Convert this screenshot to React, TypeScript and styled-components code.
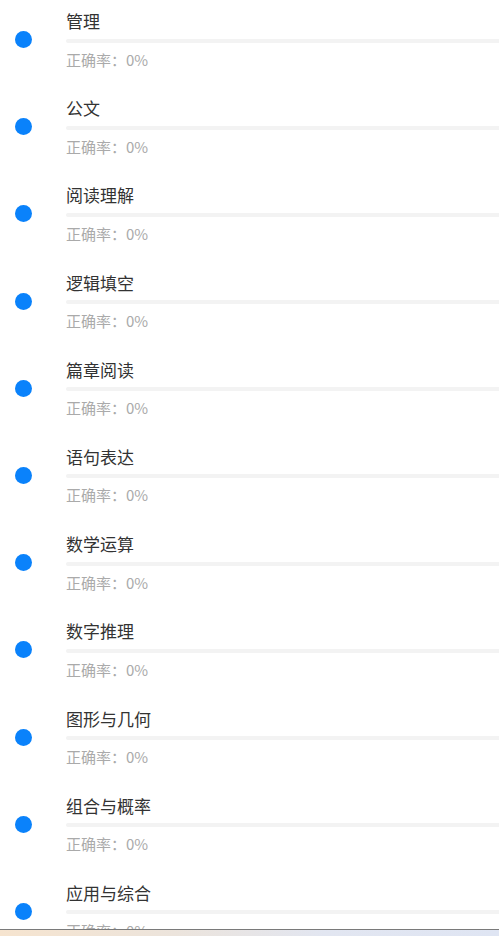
import React from "react";
import { styled, createGlobalStyle } from "styled-components";

const GlobalStyle = createGlobalStyle`
    html, body {
        margin: 0;
        padding: 0;
        background: #ffffff;
    }
    body {
        font-family: "Noto Sans CJK SC", "Noto Sans", sans-serif;
    }
`

const Page = styled.div`
    height: 936px;
    display: flex;
    flex-direction: column;
    overflow: hidden;
`

const List = styled.div`
    flex: 1;
    overflow: hidden;
`

const Item = styled.div`
    height: 87.2px;
    display: flex;
    box-sizing: border-box;
`

const DotCol = styled.div`
    width: 66px;
    flex-shrink: 0;
    padding-left: 15px;
    padding-top: 31px;
    box-sizing: border-box;
`

const Dot = styled.div`
    width: 17px;
    height: 17px;
    border-radius: 50%;
    background: #0a82fb;
`

const Content = styled.div`
    flex: 1;
    padding-top: 9px;
`

const Title = styled.div`
    font-size: 17px;
    line-height: 23px;
    color: #333333;
`

const Bar = styled.div`
    margin-top: 6.5px;
    height: 4px;
    background: #f3f3f3;
    border-radius: 2px 0 0 2px;
`

const Rate = styled.div`
    margin-top: 6px;
    font-size: 15px;
    line-height: 22px;
    color: #aaaaaa;
`

const Strip = styled.div`
    height: 6px;
    flex-shrink: 0;
    border-top: 1.5px solid #7a7a7a;
    background: linear-gradient(to right, #f6e4cf 0%, #ece4dc 35%, #e2e6f1 65%, #dfe5f3 100%);
`

const topics = [
    "管理",
    "公文",
    "阅读理解",
    "逻辑填空",
    "篇章阅读",
    "语句表达",
    "数学运算",
    "数字推理",
    "图形与几何",
    "组合与概率",
    "应用与综合",
]

const App: React.FC = () => {
    return (
        <Page>
            <GlobalStyle />
            <List>
                {topics.map((name) => (
                    <Item key={name}>
                        <DotCol>
                            <Dot />
                        </DotCol>
                        <Content>
                            <Title>{name}</Title>
                            <Bar />
                            <Rate>正确率：0%</Rate>
                        </Content>
                    </Item>
                ))}
            </List>
            <Strip />
        </Page>
    )
}

export default App;
